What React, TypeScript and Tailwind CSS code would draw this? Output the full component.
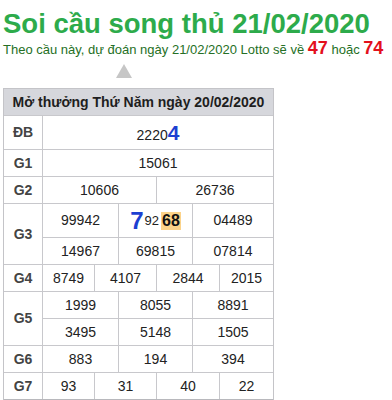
import React from "react";

const font = { fontFamily: '"Liberation Sans", Arial, sans-serif' };

function Label({ children, rows = 1 }: { children: React.ReactNode; rows?: number }) {
  return (
    <div
      className={`bg-white flex items-center justify-center font-bold text-[14px] text-[#444] ${rows === 2 ? "row-span-2" : ""}`}
    >
      {children}
    </div>
  );
}

function Cell({ children, span }: { children: React.ReactNode; span: string }) {
  return (
    <div className={`bg-white flex items-center justify-center text-[14px] text-[#222] ${span}`}>
      {children}
    </div>
  );
}

export default function App() {
  return (
    <div className="bg-white w-[392px] h-[400px] overflow-hidden" style={font}>
      <div className="pl-[3px] pt-[8px]">
        <h1 className="text-[27.5px] leading-[32px] font-bold text-[#2dab4b] whitespace-nowrap">
          Soi cầu song thủ 21/02/2020
        </h1>
        <p className="text-[13px] leading-[18px] text-[#256f25] whitespace-nowrap -mt-[1px]">
          Theo cầu này, dự đoán ngày 21/02/2020 Lotto sẽ về{" "}
          <span className="text-[18px] font-bold text-[#e3101c]">47</span> hoặc{" "}
          <span className="text-[18px] font-bold text-[#e3101c]">74</span>
        </p>
      </div>
      <div className="ml-[116px] mt-[5px] w-0 h-0 border-l-[8px] border-r-[8px] border-b-[14px] border-l-transparent border-r-transparent border-b-[#c6c6c6]" />
      <div className="ml-[3px] mt-[10px] w-[271px] border border-[#c4c4c8] border-b-2 border-b-[#b8b8bc] bg-[#c8c8cc] grid gap-px grid-cols-[38px_51px_23px_37px_35px_26px_53px] grid-rows-[26px_33px_26px_26px_33px_26px_26px_26px_26px_26px_26px]">
        <div className="col-span-7 bg-[#d6d7dc] flex items-center justify-center font-bold text-[14px] text-[#1e1e1e]">
          Mở thưởng Thứ Năm ngày 20/02/2020
        </div>

        <Label>ĐB</Label>
        <Cell span="col-span-6">
          <span className="leading-none">
            2220<span className="text-[21px] font-bold text-[#1c3fd1]">4</span>
          </span>
        </Cell>

        <Label>G1</Label>
        <Cell span="col-span-6">15061</Cell>

        <Label>G2</Label>
        <Cell span="col-span-3">10606</Cell>
        <Cell span="col-span-3">26736</Cell>

        <Label rows={2}>G3</Label>
        <Cell span="col-span-2">99942</Cell>
        <Cell span="col-span-2">
          <span className="flex items-center">
            <span className="text-[24px] leading-none font-bold text-[#1c3fd1]">7</span>
            <span className="text-[13px] ml-[1px]">92</span>
            <span className="text-[16px] font-bold bg-[#fcd38a] text-[#111] px-[1px] leading-[18px] ml-[2px]">68</span>
          </span>
        </Cell>
        <Cell span="col-span-2">04489</Cell>
        <Cell span="col-span-2">14967</Cell>
        <Cell span="col-span-2">69815</Cell>
        <Cell span="col-span-2">07814</Cell>

        <Label>G4</Label>
        <Cell span="col-span-1">8749</Cell>
        <Cell span="col-span-2">4107</Cell>
        <Cell span="col-span-2">2844</Cell>
        <Cell span="col-span-1">2015</Cell>

        <Label rows={2}>G5</Label>
        <Cell span="col-span-2">1999</Cell>
        <Cell span="col-span-2">8055</Cell>
        <Cell span="col-span-2">8891</Cell>
        <Cell span="col-span-2">3495</Cell>
        <Cell span="col-span-2">5148</Cell>
        <Cell span="col-span-2">1505</Cell>

        <Label>G6</Label>
        <Cell span="col-span-2">883</Cell>
        <Cell span="col-span-2">194</Cell>
        <Cell span="col-span-2">394</Cell>

        <Label>G7</Label>
        <Cell span="col-span-1">93</Cell>
        <Cell span="col-span-2">31</Cell>
        <Cell span="col-span-2">40</Cell>
        <Cell span="col-span-1">22</Cell>
      </div>
    </div>
  );
}
